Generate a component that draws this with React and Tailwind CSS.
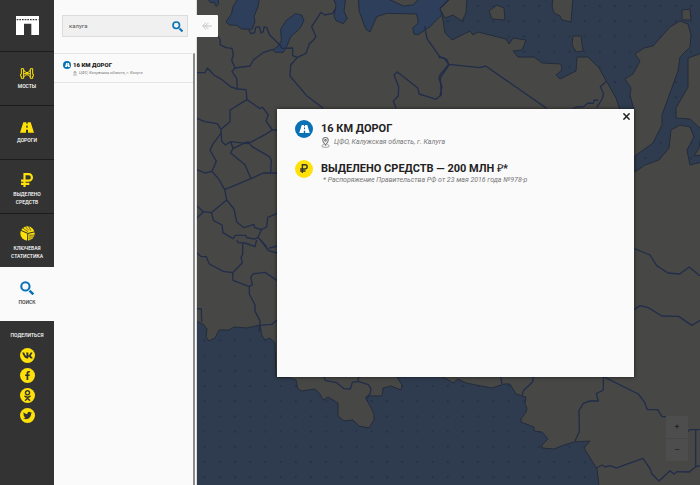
import { FaVk, FaFacebookF, FaOdnoklassniki, FaTwitter } from "react-icons/fa";

function LogoIcon() {
  return (
    <svg viewBox="0 0 69 57" className="h-[19px] w-[23px]" aria-hidden="true">
      <path d="M0 0H69V57H46V23H24V57H0Z" fill="#fff" />
      <path d="M2 11H67" stroke="#333" strokeWidth="4" strokeDasharray="5 3" />
    </svg>
  );
}

function BridgeIcon({ className }) {
  return (
    <svg viewBox="0 0 42 33" className={className} fill="none" stroke="currentColor" strokeWidth="3" aria-hidden="true">
      <path d="M4 2H11V31H4V24H1V19H4ZM38 2H31V31H38V24H41V19H38ZM11 6Q15 14 21 14Q27 14 31 6M11 27Q15 20 21 20Q27 20 31 27M11 17H31" />
    </svg>
  );
}

function RoadIcon({ className }) {
  return (
    <svg viewBox="0 0 42 32" className={className} fill="currentColor" aria-hidden="true">
      <path d="M10 0H19V5H23V0H32L42 32H24V23H18V32H0ZM19 10V17H23V10Z" fillRule="evenodd" />
    </svg>
  );
}

function RubleIcon({ className }) {
  return (
    <svg viewBox="0 0 36 42" className={className} fill="none" stroke="currentColor" strokeWidth="6.500" aria-hidden="true">
      <path d="M10.500 42V3.500H23A9.500 9.500 0 0 1 23 23H0M0 32.500H25" />
    </svg>
  );
}

function PieIcon({ className }) {
  return (
    <svg viewBox="0 0 44 44" className={className} aria-hidden="true">
      <circle cx="22" cy="22" r="21" fill="currentColor" />
      <path d="M1 12L23 22L44 17M23 22L22 44" stroke="#333" strokeWidth="3" fill="none" />
      <path d="M8 6L24 17M15 1L26 13M25 0L32 14M27 27L42 27M27 32L40 33M26 37L34 39" stroke="#333" strokeWidth="2" fill="none" />
    </svg>
  );
}

function SearchIcon({ className }) {
  return (
    <svg viewBox="0 0 44 44" className={className} fill="none" stroke="currentColor" aria-hidden="true">
      <circle cx="17" cy="17" r="13" strokeWidth="6.500" />
      <path d="M30 30L42 42" strokeWidth="8" />
    </svg>
  );
}

function PinIcon({ className }) {
  return (
    <svg viewBox="0 0 26 32" className={className} fill="none" stroke="currentColor" strokeWidth="3" aria-hidden="true">
      <path d="M13 24C9 18 5 14 5 9.500A8 8 0 0 1 21 9.500C21 14 17 18 13 24Z" />
      <circle cx="13" cy="9.500" r="2.500" />
      <path d="M8 22C-2 25 1 30 13 30S28 25 18 22" strokeWidth="2" />
    </svg>
  );
}

function MapCanvas() {
  return (
    <svg viewBox="197 0 503 485" preserveAspectRatio="xMidYMid slice" className="absolute inset-0 h-full w-full" aria-hidden="true">
      <defs>
        <pattern id="dots" x="197" y="-1.600" width="15.200" height="15.200" patternUnits="userSpaceOnUse">
          <rect width="15.200" height="15.200" fill="#2f3c4f" />
          <circle cx="7.600" cy="7.600" r="1.300" fill="#263248" />
        </pattern>
      </defs>
      <rect x="197" width="503" height="485" fill="#474745" />
      <g stroke="#232c3c" strokeWidth="3" strokeLinejoin="round" transform="translate(190 0) scale(.33333)" fill="#2d3f5b">
        <path d="M52 -5L62 8L72 6L79 20L86 10L84 -5Z" />
        <path d="M145 -5L128 22L125 40L108 66L118 75L140 76L155 87L186 88L195 66L192 50L204 20L208 -5Z" />
        <path d="M316 41L335 45L342 62L330 85L302 110L290 140L280 157L256 157L248 150L265 138L274 122L272 88L288 62Z" />
        <path d="M430 -5L438 15L432 48L438 62L460 71L472 55L462 35L467 -5Z" />
        <path d="M505 -5L508 35L528 88L540 96L560 50L590 40L680 42L685 68L668 85L672 102L684 104L720 80L750 50L800 10L800 -5H690L668 15L640 18L590 -5Z" />
      </g>
      <g stroke="#232c3c" strokeWidth="1" strokeLinejoin="round">
        <path fill="url(#dots)" d="M450 -2L440 8L443 20L445 33L452 40L470 31L473 35L478 32L506 39L509 44L513 38L526 40L522 50L513 51L518 57L534 57L542 63L561 64L562 70L556 75L560 79L576 71L577 57L588 57L599 68L608 84L616 98L620 110L634 110L630 95L631 88L625 79L633 74L640 61L635 54L644 48L653 46L670 27L680 21L688 24L691 35L690 47L680 57L678 71L662 115L662 125L653 143L635 156L635 172L645 165L659 160L669 148L671 130L680 125L690 127L694 137L687 150L690 165L702 162V155L694 156L699 148L702 130L690 119L676 118L676 108L688 87L688 58L702 53V-2Z" />
        <path fill="#474745" d="M440 9L451 -2H467L466 13L462 21L453 15L445 18ZM489 11L497 5L504 8L505 20L492 19ZM553 -2L552 6L554 13L560 16L562 20L571 22L573 -2ZM573 36L581 36L583 51L576 52L572 45ZM682 10L690 9L691 20L682 20Z" />
        <path fill="url(#dots)" d="M196 321L203 324L207 329L206 337L209 341L215 338L219 330L229 330L234 327L247 328L260 325L262 336L265 340L270 338L275 343L276 377L284 378L288 377L296 380L298 389L302 391L315 389L320 394L323 400L328 397L338 403L338 416L344 421L353 420L359 426L369 428L374 420V414L366 398L369 396L382 396L383 388L391 386L401 390L402 385L397 377L440 375L450 381L453 383L458 379L466 383L492 388L504 384H510L516 394L526 397L525 404L527 408L526 412L521 419L521 422L534 427V431L542 432L548 439L542 445V448L554 449L564 445L574 442L590 441L584 448L597 469L599 486H196Z" />
      </g>
      <g fill="none" stroke="#222d4a" strokeWidth="4" strokeLinejoin="round">
        <g transform="translate(190 0) scale(.33333)">
          <path d="M84 108L91 120L90 134L108 143L126 145L130 165L125 180L135 204L126 215L140 235L142 267L123 261L96 239L72 225L52 204L45 218L20 218M135 204L180 198L190 180L221 157L248 148M176 90L183 101L194 98L197 82L208 80L213 99L220 95L222 81L230 82L239 105L269 134L276 145L308 144V167L322 172L348 160L358 132L370 120L378 110L365 80L393 37L404 45L428 40L435 28" />
          <path d="M322 172L302 195L300 228L350 287L400 325M142 267L168 269L171 299L120 330L120 365L93 388L82 371L45 365L20 355M171 299L190 312L210 326L218 322L235 345L228 363L247 390L262 390M247 390L225 404L174 431L122 425L106 435L95 424L93 388M92 401L70 430L60 450L79 484L66 514L45 519L20 509M122 425L129 445L122 459L165 494L183 536L104 569L86 537L66 514M129 445L174 425L185 439L238 470L244 480L242 518M183 536L220 519H262M104 569L110 600L64 638L40 635L20 617M110 600L132 627L140 666L162 683L192 673L194 683L214 689L230 681L233 652L262 640M64 638L71 662L96 675L99 698L129 716L136 706L168 706L170 713L194 717L204 712L214 689M204 712L230 740M40 635L20 655" />
          <path d="M704 78L711 116L749 170L770 178L777 195L751 233L754 284L738 298L720 292L687 282L684 265L622 216L612 225L626 260L625 288L610 303L618 325" />
        </g>
        <g transform="translate(440 0) scale(.33333)">
          <path d="M-5 172L13 174L26 193L0 225L-3 236L6 260L0 288M26 193L120 203L137 198L320 325M500 243L481 260L491 282L485 300L470 322M475 301L463 300L460 310L444 309L430 320L410 321L400 325" />
        </g>
        <g transform="translate(190 240) scale(.33333)">
          <path d="M20 38L32 49L49 50L58 72L100 94L128 98L157 68L153 52L158 42V10M128 98L129 121L178 140L187 134L182 112L190 101L225 97L262 122M178 140V162L195 195V214L210 242L209 256L245 253L262 240M140 0L145 8L165 9L195 20L200 0M212 0L235 32L262 39M235 25L262 18M20 206L34 207L35 245M402 410L407 422L440 428L462 446L481 447L487 427L504 424L535 434L543 446L540 462L528 473L533 485M504 424L506 410M209 256L208 275" />
        </g>
        <g transform="translate(440 240) scale(.33333)">
          <path d="M583 26L630 45L650 77L684 99L719 102L748 81L776 105L800 115M583 208L600 197L625 203L665 228L716 229L755 256L784 239M182 410L186 432M280 410L278 425L250 452L247 465M490 410V450L469 461L475 483H450L430 490L417 512L418 575L405 603M490 410L595 462L614 487L622 509H653L666 530H678M742 575L750 569H785M767 570V680L785 677M469 684L486 675L495 681L509 677L530 684L609 655L632 689L634 700L657 723L690 692L702 702L711 695L748 696L767 680" />
        </g>
      </g>
    </svg>
  );
}

const sections = [
  { icon: <BridgeIcon className="mt-1 h-[11px] w-[14px]" />, lines: ["МОСТЫ"] },
  { icon: <RoadIcon className="mt-1 h-[11px] w-[14px]" />, lines: ["ДОРОГИ"] },
  { icon: <RubleIcon className="h-[14px] w-[12px]" />, lines: ["ВЫДЕЛЕНО", "СРЕДСТВ"] },
  { icon: <PieIcon className="h-[15px] w-[15px]" />, lines: ["КЛЮЧЕВАЯ", "СТАТИСТИКА"] },
  { icon: <SearchIcon className="h-[14px] w-[14px] text-[#0872b5]" />, lines: ["ПОИСК"], active: true },
];

const networks = [
  { name: "ВКонтакте", icon: <FaVk size={11} /> },
  { name: "Facebook", icon: <FaFacebookF size={9} /> },
  { name: "Одноклассники", icon: <FaOdnoklassniki size={11} /> },
  { name: "Twitter", icon: <FaTwitter size={9} /> },
];

function Sidebar() {
  return (
    <nav className="flex w-[54px] shrink-0 flex-col bg-[#333]">
      <a href="#home" aria-label="Главная" className="flex h-[51px] items-center justify-center">
        <LogoIcon />
      </a>
      {sections.map((s) => (
        <button
          key={s.lines[0]}
          type="button"
          className={
            "flex h-[54px] flex-col items-center gap-[3px] border-t pt-3 text-[5px] leading-[8px] font-medium " +
            (s.active ? "border-[#fafafa] bg-[#fafafa] text-[#333]" : "border-[#1c1c1c] text-white")
          }
        >
          <span className="flex h-[15px] items-center text-[#ffe10a]">{s.icon}</span>
          <span>
            {s.lines.map((line) => (
              <span key={line} className="block">{line}</span>
            ))}
          </span>
        </button>
      ))}
      <div className="flex flex-col items-center gap-[5px] pt-[10px]">
        <p className="mb-1 text-[5px] leading-[8px] font-medium text-white">ПОДЕЛИТЬСЯ</p>
        {networks.map((n) => (
          <a key={n.name} href="#share" aria-label={n.name} className="flex size-[15px] items-center justify-center rounded-full bg-[#ffe10a] text-[#333]">
            {n.icon}
          </a>
        ))}
      </div>
    </nav>
  );
}

function SearchPanel() {
  return (
    <aside className="relative z-10 flex w-[143px] shrink-0 flex-col border-r border-[#ddd] bg-[#fafafa]">
      <form className="h-[53px] px-2 pt-[15px]" onSubmit={(e) => e.preventDefault()}>
        <div className="flex h-[22px] items-center border border-[#dcdcdc] bg-[#f0f0f0] pr-1 pl-[6px]">
          <input aria-label="Поиск" defaultValue="калуга" className="w-full min-w-0 bg-transparent text-[6px] leading-[8px] text-[#555] outline-none" />
          <button type="submit" aria-label="Найти" className="shrink-0 text-[#0872b5]">
            <SearchIcon className="size-[11px]" />
          </button>
        </div>
      </form>
      <div className="mr-px flex-1 border-t border-r-2 border-t-[#e4e4e4] border-r-[#8c8c8c]">
        <article className="flex gap-[2px] border-b border-[#e4e4e4] pt-[7px] pb-[5px] pl-[9px]">
          <span className="flex size-[8px] items-center justify-center rounded-full bg-[#0872b5] text-white">
            <RoadIcon className="h-1 w-[5px]" />
          </span>
          <div>
            <h2 className="text-[6px] leading-[8px] font-black text-[#222]">16 КМ ДОРОГ</h2>
            <p className="flex items-center gap-[2px] text-[4px] leading-[8px] text-[#777] italic">
              <PinIcon className="h-[5px] w-1" />
              ЦФО, Калужская область, г. Калуга
            </p>
          </div>
        </article>
      </div>
      <button type="button" aria-label="Свернуть панель" className="absolute top-[15px] left-full flex h-[22px] w-[22px] items-center justify-center rounded-r-[1px] bg-[#fafafa] text-[#bbb]">
        <svg viewBox="0 0 30 24" className="h-2 w-[10px]" fill="none" stroke="currentColor" strokeWidth="2.500" aria-hidden="true">
          <path d="M12 1L2 12L12 23M19 3L10 12L19 21M3 12H30" />
        </svg>
      </button>
    </aside>
  );
}

function DetailRow({ badge, children }) {
  return (
    <div className="flex gap-2">
      {badge}
      <div>{children}</div>
    </div>
  );
}

function DetailDialog() {
  return (
    <section role="dialog" aria-label="16 км дорог" className="relative flex min-h-[268px] flex-1 flex-col gap-3 bg-[#fafafa] px-[18px] pt-[11px] shadow-[0_0_4px_rgba(0,0,0,0.6)]">
      <button type="button" aria-label="Закрыть" className="absolute top-1 right-1 text-[#222]">
        <svg viewBox="0 0 18 18" className="size-[7px]" stroke="currentColor" strokeWidth="4" aria-hidden="true">
          <path d="M1 1L17 17M17 1L1 17" />
        </svg>
      </button>
      <DetailRow
        badge={
          <span className="flex size-[18px] shrink-0 items-center justify-center rounded-full bg-[#0872b5] text-white">
            <RoadIcon className="h-2 w-[11px]" />
          </span>
        }
      >
        <h1 className="text-[11px] leading-[17px] font-bold text-[#222]">16 КМ ДОРОГ</h1>
        <p className="flex items-center gap-1 text-[7px] leading-[10px] text-[#777] italic">
          <PinIcon className="h-[11px] w-[9px]" />
          ЦФО, Калужская область, г. Калуга
        </p>
      </DetailRow>
      <DetailRow
        badge={
          <span className="flex size-[18px] shrink-0 items-center justify-center rounded-full bg-[#ffe10a] text-[#333]">
            <RubleIcon className="h-[9px] w-2" />
          </span>
        }
      >
        <h2 className="text-[11px] leading-[17px] font-bold text-[#222]">
          ВЫДЕЛЕНО СРЕДСТВ — 200 МЛН <span className="font-['Liberation_Serif',serif] font-normal">₽</span>*
        </h2>
        <p className="pl-[2px] text-[7px] leading-[6px] text-[#777] italic">
          * Распоряжение Правительства РФ от 23 мая 2016 года №978-р
        </p>
      </DetailRow>
    </section>
  );
}

export default function App() {
  return (
    <div className="flex min-h-screen font-['Roboto',sans-serif]">
      <Sidebar />
      <SearchPanel />
      <main className="relative flex flex-1 items-center overflow-hidden pr-[66px] pl-20">
        <MapCanvas />
        <DetailDialog />
        <div className="absolute right-3 bottom-6 flex w-[22px] flex-col divide-y divide-[#464646] bg-[#4d4d4d] text-[8px] leading-[22px] font-bold text-[#222]">
          <button type="button" aria-label="Приблизить">+</button>
          <button type="button" aria-label="Отдалить">–</button>
        </div>
      </main>
    </div>
  );
}
